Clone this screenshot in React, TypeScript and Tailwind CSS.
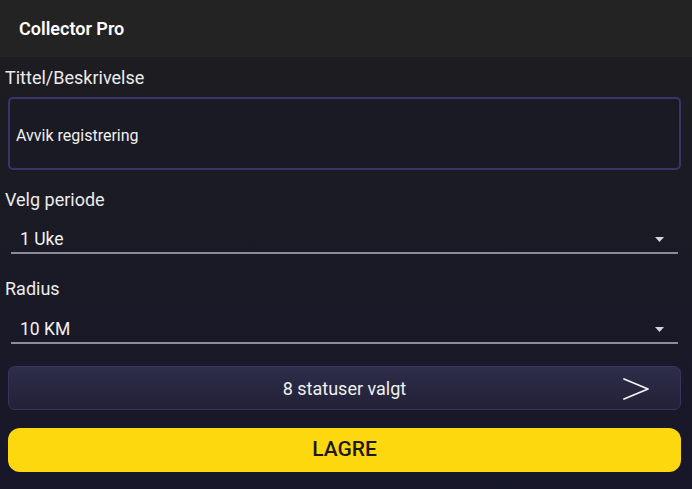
function Caret() {
  return (
    <svg width="9" height="5" viewBox="0 0 9 5" className="shrink-0">
      <path d="M0 0 L9 0 L4.5 5 Z" fill="#d4d4dc" />
    </svg>
  );
}

function Select({ value }: { value: string }) {
  return (
    <div className="ml-[11px] mr-[14px] flex h-[31px] items-center justify-between border-b-2 border-[#8b8b99] pl-[9px] pr-[14px] pt-[3px]">
      <span className="text-[17.5px] text-[#f2f2f2]">{value}</span>
      <Caret />
    </div>
  );
}

export default function App() {
  return (
    <div
      className="flex h-[489px] w-[692px] flex-col overflow-hidden bg-gradient-to-b from-[#1d1d20] to-[#17172a] text-[#ececec]"
      style={{ fontFamily: "Roboto, 'Noto Sans', sans-serif" }}
    >
      <header className="flex h-[57px] shrink-0 items-center bg-[#232323] px-[19px]">
        <h1 className="text-[18px] font-semibold text-white">Collector Pro</h1>
      </header>

      <main className="flex flex-col">
        <label className="mt-[11px] h-[20px] pl-[5px] text-[18px] leading-[20px]">
          Tittel/Beskrivelse
        </label>
        <div className="ml-[8px] mr-[11px] mt-[9px] flex h-[73px] items-center rounded-[5px] border-2 border-[#38346c] bg-[#1a1a26]/40 px-[6px] pt-[5px]">
          <span className="text-[16px] text-[#f0f0f0]">Avvik registrering</span>
        </div>

        <label className="mt-[20px] h-[20px] pl-[5px] text-[18px] leading-[20px]">
          Velg periode
        </label>
        <div className="mt-[13px]">
          <Select value="1 Uke" />
        </div>

        <label className="mt-[25px] h-[20px] pl-[5px] text-[18px] leading-[20px]">
          Radius
        </label>
        <div className="mt-[14px]">
          <Select value="10 KM" />
        </div>

        <button className="relative ml-[8px] mr-[11px] mt-[22px] flex h-[44px] items-center justify-center rounded-[7px] border border-[#363560] bg-gradient-to-b from-[#2e2d4a] to-[#222137] text-[18px] text-[#f0f0f0]">
          8 statuser valgt
          <svg
            width="26"
            height="22"
            viewBox="0 0 26 22"
            className="absolute right-[31px] top-[11px]"
          >
            <path
              d="M1 1 L25 11 L1 21"
              fill="none"
              stroke="#f4f4f4"
              strokeWidth="1.8"
              strokeLinecap="round"
              strokeLinejoin="round"
            />
          </svg>
        </button>

        <button className="ml-[8px] mr-[11px] mt-[18px] flex h-[44px] items-center justify-center rounded-[12px] bg-[#fdd80e] text-[21px] font-medium text-[#1c1a10]">
          LAGRE
        </button>
      </main>
    </div>
  );
}
